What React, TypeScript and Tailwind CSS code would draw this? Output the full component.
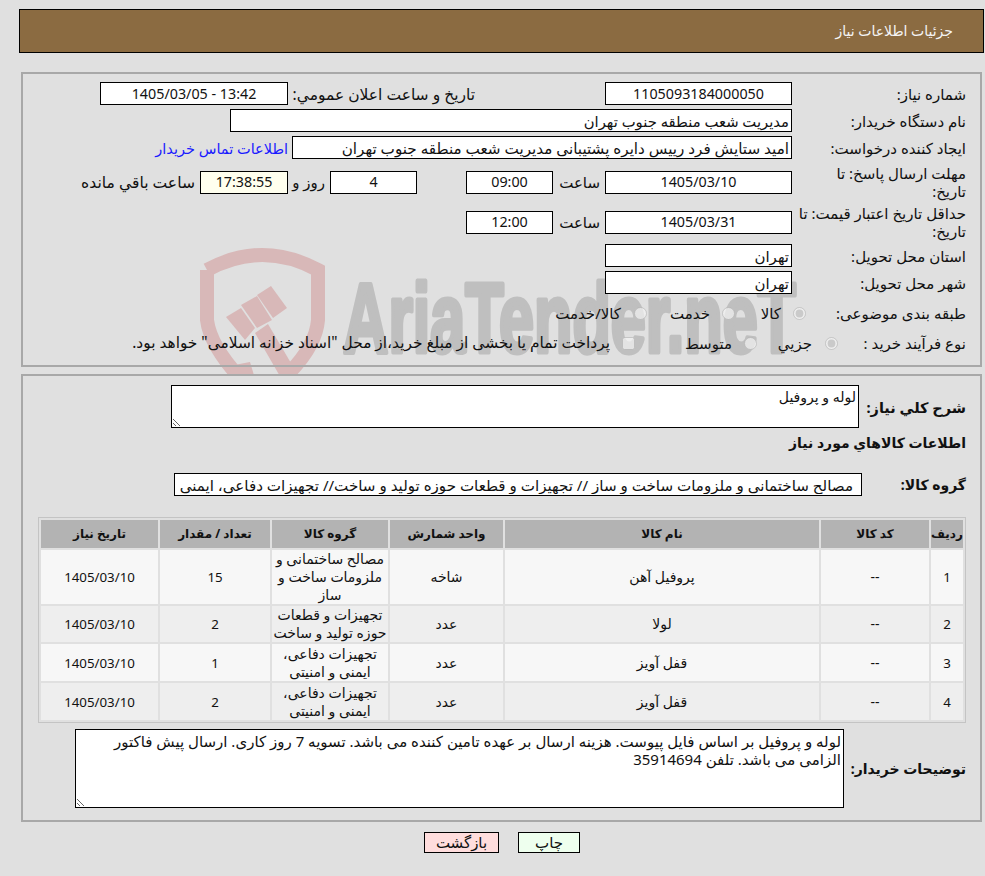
const items = [
  { id: 1, code: "--", name: "پروفیل آهن", unit: "شاخه", group: "مصالح ساختمانی و ملزومات ساخت و ساز", qty: 15, date: "1405/03/10", h: "h-[54px]", bg: "bg-[#f7f7f7]" },
  { id: 2, code: "--", name: "لولا", unit: "عدد", group: "تجهیزات و قطعات حوزه تولید و ساخت", qty: 2, date: "1405/03/10", h: "h-[36px]", bg: "bg-[#eeeeee]" },
  { id: 3, code: "--", name: "قفل آویز", unit: "عدد", group: "تجهیزات دفاعی، ایمنی و امنیتی", qty: 1, date: "1405/03/10", h: "h-[37px]", bg: "bg-[#f7f7f7]" },
  { id: 4, code: "--", name: "قفل آویز", unit: "عدد", group: "تجهیزات دفاعی، ایمنی و امنیتی", qty: 2, date: "1405/03/10", h: "h-[37px]", bg: "bg-[#eeeeee]" },
];

const headers = [
  { title: "ردیف", w: "w-[32px]" },
  { title: "کد کالا", w: "w-[108px]" },
  { title: "نام کالا", w: "w-[314px]" },
  { title: "واحد شمارش", w: "w-[113px]" },
  { title: "گروه کالا", w: "w-[116px]" },
  { title: "تعداد / مقدار", w: "w-[110px]" },
  { title: "تاریخ نیاز", w: "w-[117px]" },
];

function Box({ className, children }: { className: string; children?: React.ReactNode }) {
  return (
    <div className={"h-[23px] shrink-0 border border-black flex items-center whitespace-nowrap overflow-hidden " + className}>
      {children}
    </div>
  );
}

// watermark behind the form
function Watermark() {
  return (
    <svg className="absolute left-0 top-0 w-[985px] h-[430px] [direction:ltr]" viewBox="0 0 985 430">
      <g fill="none" stroke="#d8b8b8" strokeWidth="14">
        <path d="M207 270 Q262 240 318 270 L318 320 Q316 345 290 372" />
        <path d="M207 270 L207 320 Q210 345 240 378" />
      </g>
      <g fill="#d8b8b8">
        <path d="M226 317 L241 308 L255 328 L245 340 Z" />
        <path d="M241 305 L257 296 L272 320 L257 328 Z" />
        <path d="M257 295 L271 286 L287 308 L273 318 Z" />
        <path d="M255 333 L268 324 L298 375 L285 385 Z" />
        <path d="M229 366 L250 362 L257 385 L236 385 Z" />
      </g>
      <text
        x="343"
        y="352"
        textLength="453"
        lengthAdjust="spacingAndGlyphs"
        fontFamily="'Liberation Sans', sans-serif"
        fontWeight="bold"
        fontSize="98"
        fill="#bfbfbf"
        stroke="#bfbfbf"
        strokeWidth="5"
        strokeLinejoin="round"
      >
        AriaTender.neT
      </text>
    </svg>
  );
}

export default function App() {
  return (
    <div
      dir="rtl"
      className="relative min-h-[876px] bg-[#e0e0e0] text-[15px] leading-[18px] text-[#111] overflow-hidden [font-family:'Noto_Sans','DejaVu_Sans',sans-serif]"
    >
      <Watermark />
      <div className="relative">
        {/* title bar */}
        <div className="ml-[19px] mr-[1px] mt-[9px] h-[44px] pr-[30px] flex items-center border border-black bg-[#8b6b41] text-[14px] text-[#f4f4f4]">
          جزئیات اطلاعات نیاز
        </div>

        {/* main info */}
        <div className="ml-[21px] mr-[3px] mt-[19px] h-[295px] border-2 border-[#a8a8a8] pt-[8px] pr-[14px]">
          <div className="flex items-center">
            <div className="w-[174px] shrink-0">شماره نیاز:</div>
            <Box className="w-[187px] justify-center bg-white text-[14.3px]">1105093184000050</Box>
            <div className="w-[130px] shrink-0" />
            <div className="w-[182px] shrink-0 whitespace-nowrap text-[15.5px]">تاریخ و ساعت اعلان عمومي:</div>
            <Box className="w-[188px] mr-[5px] justify-center bg-white text-[14.3px]">13:42 - 1405/03/05</Box>
          </div>
          <div className="flex items-center mt-[4px]">
            <div className="w-[174px] shrink-0">نام دستگاه خریدار:</div>
            <Box className="w-[562px] pr-[2px] bg-white text-[14.8px]">مدیریت شعب منطقه جنوب تهران</Box>
          </div>
          <div className="flex items-center mt-[4px]">
            <div className="w-[174px] shrink-0">ایجاد کننده درخواست:</div>
            <Box className="w-[500px] pr-[2px] bg-white text-[15.2px]">امید ستایش فرد رییس دایره پشتیبانی مدیریت شعب منطقه جنوب تهران</Box>
            <a className="mr-[4px] text-[#1a1aff] whitespace-nowrap text-[14.5px]">اطلاعات تماس خریدار</a>
          </div>
          <div className="flex items-center mt-[5px] h-[36px]">
            <div className="w-[174px] shrink-0">مهلت ارسال پاسخ: تا<br />تاریخ:</div>
            <Box className="w-[187px] justify-center bg-white text-[14.3px]">1405/03/10</Box>
            <div className="w-[52px] shrink-0 pr-[5px]">ساعت</div>
            <Box className="w-[87px] justify-center bg-white text-[14.3px]">09:00</Box>
            <div className="w-[49px] shrink-0" />
            <Box className="w-[87px] justify-center bg-white text-[14.3px]">4</Box>
            <div className="w-[42px] shrink-0 pr-[5px] whitespace-nowrap">روز و</div>
            <Box className="w-[88px] justify-center bg-[#ffffee] text-[14.3px]">17:38:55</Box>
            <div className="mr-[5px] whitespace-nowrap text-[15.6px]">ساعت باقي مانده</div>
          </div>
          <div className="flex items-center mt-[5px] h-[34px]">
            <div className="w-[174px] shrink-0">حداقل تاریخ اعتبار قیمت: تا<br />تاریخ:</div>
            <Box className="w-[187px] justify-center bg-white text-[14.3px]">1405/03/31</Box>
            <div className="w-[52px] shrink-0 pr-[5px]">ساعت</div>
            <Box className="w-[87px] justify-center bg-white text-[14.3px]">12:00</Box>
          </div>
          <div className="flex items-center mt-[5px]">
            <div className="w-[174px] shrink-0">استان محل تحویل:</div>
            <Box className="w-[187px] pr-[2px] bg-white">تهران</Box>
          </div>
          <div className="flex items-center mt-[4px]">
            <div className="w-[174px] shrink-0">شهر محل تحویل:</div>
            <Box className="w-[187px] pr-[2px] bg-white">تهران</Box>
          </div>
          <div className="flex items-center mt-[8px] h-[22px]">
            <div className="w-[160px] shrink-0 whitespace-nowrap">طبقه بندی موضوعی:</div>
            <label className="w-[71px] shrink-0 flex items-center">
              <input type="radio" name="cat" disabled defaultChecked className="w-[13px] h-[13px] m-0" />
              <span className="mr-[12px]">کالا</span>
            </label>
            <label className="w-[88px] shrink-0 flex items-center">
              <input type="radio" name="cat" disabled className="w-[13px] h-[13px] m-0" />
              <span className="mr-[12px]">خدمت</span>
            </label>
            <label className="flex items-center">
              <input type="radio" name="cat" disabled className="w-[13px] h-[13px] m-0" />
              <span className="mr-[13px]">کالا/خدمت</span>
            </label>
          </div>
          <div className="flex items-center mt-[8px] h-[22px]">
            <div className="w-[128px] shrink-0 whitespace-nowrap">نوع فرآیند خرید :</div>
            <label className="w-[81px] shrink-0 flex items-center">
              <input type="radio" name="proc" disabled defaultChecked className="w-[13px] h-[13px] m-0" />
              <span className="mr-[13px]">جزيي</span>
            </label>
            <label className="w-[122px] shrink-0 flex items-center">
              <input type="radio" name="proc" disabled className="w-[13px] h-[13px] m-0" />
              <span className="mr-[12px]">متوسط</span>
            </label>
            <label className="flex items-center">
              <input type="checkbox" disabled className="w-[13px] h-[13px] m-0" />
              <span className="mr-[12px] text-[15.4px] whitespace-nowrap">پرداخت تمام یا بخشی از مبلغ خرید،از محل "اسناد خزانه اسلامی" خواهد بود.</span>
            </label>
          </div>
        </div>

        {/* goods */}
        <div className="ml-[21px] mr-[3px] mt-[7px] h-[448px] border-2 border-[#a8a8a8] bg-[#e0e0e0] pt-[9px] pr-[14px]">
          <div className="flex items-center">
            <div className="w-[107px] shrink-0 font-bold text-[14.5px] whitespace-nowrap">شرح کلي نیاز:</div>
            <textarea
              readOnly
              value="لوله و پروفیل"
              className="block w-[688px] h-[43px] shrink-0 border border-black bg-white p-[2px] text-[14px] outline-none"
            />
          </div>
          <div className="mt-[6px] h-[18px] font-bold text-[14px] flex items-center">اطلاعات کالاهاي مورد نیاز</div>
          <div className="flex items-center mt-[21px]">
            <div className="w-[104px] shrink-0 font-bold text-[14px]">گروه کالا:</div>
            <Box className="w-[688px] pr-[8px] pl-[1px] bg-white text-[15.1px]">
              <div className="overflow-hidden">
                مصالح ساختمانی و ملزومات ساخت و ساز // تجهیزات و قطعات حوزه تولید و ساخت// تجهیزات دفاعی، ایمنی و امنیتی
              </div>
            </Box>
          </div>
          <table className="mt-[21px] w-[928px] table-fixed border-separate border-spacing-[2px] border border-[#c4c4c4] text-center text-[14px]">
            <thead>
              <tr className="h-[28px]">
                {headers.map((col) => (
                  <th key={col.title} className={col.w + " p-0 bg-[#b3b3b3] text-[12px] font-bold"}>
                    {col.title}
                  </th>
                ))}
              </tr>
            </thead>
            <tbody>
              {items.map((item) => (
                <tr key={item.id} className={item.h}>
                  <td className={item.bg + " p-0 text-[13.3px]"}>{item.id}</td>
                  <td className={item.bg + " p-0"}>{item.code}</td>
                  <td className={item.bg + " p-0"}>{item.name}</td>
                  <td className={item.bg + " p-0"}>{item.unit}</td>
                  <td className={item.bg + " p-0"}>{item.group}</td>
                  <td className={item.bg + " p-0 text-[13.3px]"}>{item.qty}</td>
                  <td className={item.bg + " p-0 text-[13.3px]"}>{item.date}</td>
                </tr>
              ))}
            </tbody>
          </table>
          <div className="flex items-center mt-[6px]">
            <div className="w-[122px] shrink-0 font-bold text-[14px] whitespace-nowrap">توضیحات خریدار:</div>
            <textarea
              readOnly
              value="لوله و پروفیل بر اساس فایل پیوست. هزینه ارسال بر عهده تامین کننده می باشد. تسویه 7 روز کاری. ارسال پیش فاکتور الزامی می باشد. تلفن 35914694"
              className="block w-[769px] h-[79px] shrink-0 border border-black bg-white p-[2px] text-[15px] outline-none"
            />
          </div>
        </div>

        {/* actions */}
        <div className="flex justify-center gap-[19px] pl-[19px] mt-[10px]">
          <button className="w-[62px] h-[21px] border border-black bg-[#eeffee] text-[15px] leading-none">چاپ</button>
          <button className="w-[75px] h-[21px] border border-black bg-[#ffdddd] text-[15px] leading-none">بازگشت</button>
        </div>
      </div>
    </div>
  );
}
